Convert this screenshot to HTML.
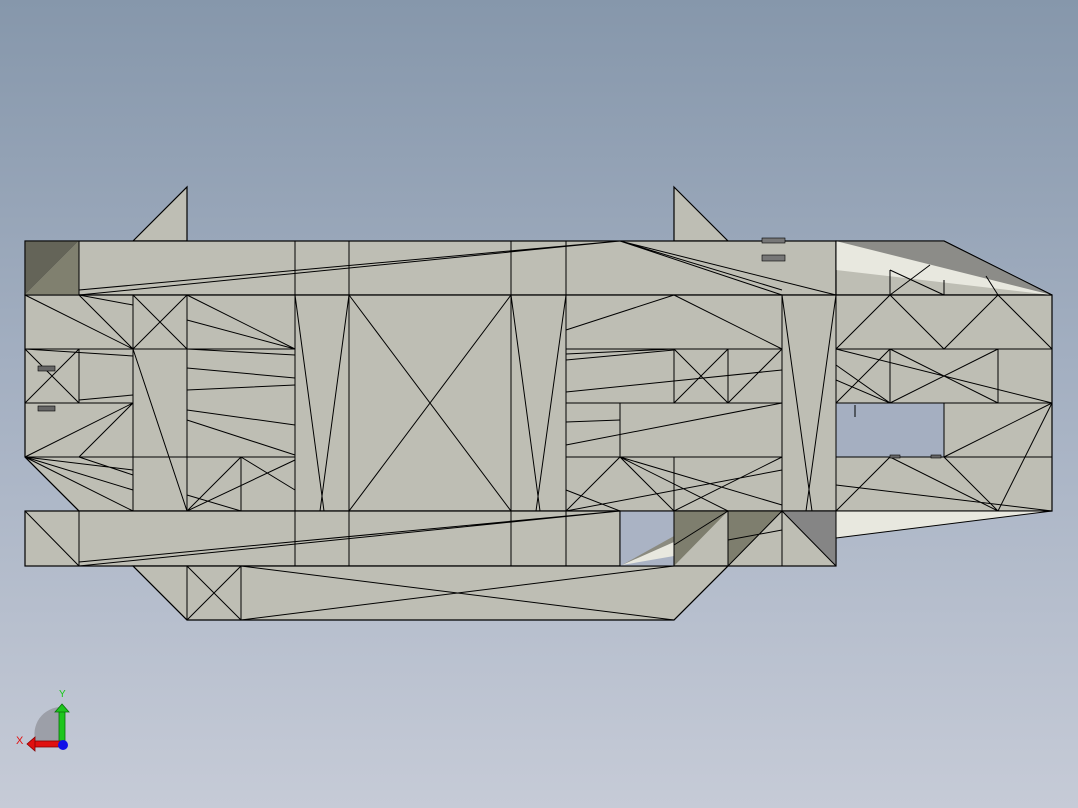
<!DOCTYPE html>
<html><head><style>
html,body{margin:0;padding:0;width:1078px;height:808px;overflow:hidden}
body{background:linear-gradient(#8697ab 0%,#a3afc1 45%,#c6cbd7 100%)}
svg{position:absolute;left:0;top:0}
</style></head><body>
<svg width="1078" height="808" viewBox="0 0 1078 808">
<g fill="#bebeb4" stroke="#000" stroke-width="1.2" stroke-linejoin="miter">
<!-- fins -->
<polygon points="133,241 187,187 187,241"/>
<polygon points="674,187 728,241 674,241"/>
<!-- top band -->
<rect x="25" y="241" width="811" height="54"/>
<polygon points="836,241 944,241 1052,295 836,295"/>
<!-- body -->
<polygon points="25,295 1052,295 1052,511 79,511 25,457"/>
<!-- bottom row -->
<rect x="25" y="511" width="595" height="55"/>
<rect x="674" y="511" width="162" height="55"/>
<!-- bottom fin -->
<polygon points="133,566 674,566 728,566 674,620 187,620"/>
</g>
<!-- holes -->
<rect x="836.6" y="403.6" width="107" height="53" fill="#a5afc1"/>
<polygon points="620.6,511.6 673.4,511.6 673.4,565.4 620.6,565.4" fill="#aab3c4"/>
<polygon points="622,565 674,540 674,556" fill="#e8e8df"/>
<polygon points="622,565 674,536 674,542" fill="#8b8b80"/>
<g fill="none" stroke="#000" stroke-width="1">
<line x1="620" y1="511" x2="620" y2="566"/><line x1="674" y1="511" x2="674" y2="566"/>
<line x1="620" y1="566" x2="674" y2="566"/><line x1="620" y1="511" x2="674" y2="511"/>
<rect x="836" y="403" width="108" height="54"/>
</g>
<!-- shaded faces -->
<polygon points="25,241 79,241 25,295" fill="#646458"/>
<polygon points="79,241 79,295 25,295" fill="#80806f"/>
<polygon points="836,241 836,270 1052,295" fill="#e8e8df"/>
<polygon points="836,241 944,241 1052,295" fill="#8c8c88"/>
<polygon points="836,511 1052,511 836,538" fill="#e8e8df"/>
<polygon points="674,511 728,511 674,566" fill="#7e7e6e"/>
<polygon points="728,511 782,511 728,566" fill="#7e7e6e"/>
<polygon points="782,511 836,511 836,566" fill="#858585"/>
<g fill="none" stroke="#000" stroke-width="1">
<!-- outline redraw -->
<polygon points="25,241 836,241 836,295 25,295"/>
<polygon points="836,241 944,241 1052,295 836,295"/>
<polygon points="25,295 1052,295 1052,511 79,511 25,457"/>
<polygon points="25,511 620,511 620,566 25,566"/>
<polygon points="674,511 836,511 836,566 674,566"/>
<polygon points="133,566 728,566 674,620 187,620"/>
<polyline points="836,511 1052,511 836,538"/>
<!-- verticals -->
<path d="M79 241V295M295 241V566M349 241V566M511 241V566M566 241V566M836 241V511M782 295V566M133 295V511M187 295V511M79 349V403M241 457V511M79 511V566M674 349V403M728 349V403M620 403V457M890 349V403M998 349V403M944 403V457M890 270V295M944 280V295M187 566V620M241 566V620M728 511V566M674 457V511"/>
<!-- horizontals -->
<path d="M25 349H295M566 349H782M836 349H1052M25 403H133M566 403H782M836 403H1052M25 457H295M566 457H782M836 457H1052M295 511H566"/>
<!-- X patterns -->
<path d="M133 295L187 349M187 295L133 349M25 349L79 403M79 349L25 403M187 566L241 620M241 566L187 620M349 295L511 511M511 295L349 511M674 349L728 403M728 349L674 403M728 403L782 349"/>
<path d="M295 295L324 511M349 295L320 511M511 295L540 511M566 295L536 511M782 295L812 511M836 295L806 511"/>
<path d="M836 349L890 295L944 349L998 295L1052 349M836 403L890 349M890 349L998 403M890 403L998 349M836 349L1052 403"/>
<path d="M1052 403L944 457M1052 403L998 511M836 511L890 457L998 511M944 457L998 511M836 485L1052 511"/>
<!-- left side diagonals -->
<path d="M25 295L133 349M79 295L133 349M79 295L133 305M187 295L295 349M187 320L295 349M25 457L133 403M79 457L133 403M25 457L133 511M25 457L133 470M25 457L133 490M79 457L133 475M187 511L133 349M187 349L295 355M187 368L295 378M187 390L295 385M187 410L295 425M187 420L295 455M187 511L241 457M187 511L295 460M187 495L241 511M241 457L295 490M25 511L79 566M79 290L620 241M79 295L620 241M241 566L674 620M241 620L674 566M79 566L620 511M79 562L620 511M25 349L133 356M79 400L133 395"/>
<!-- right-middle diagonals -->
<path d="M566 330L674 295M674 295L782 349M620 241L782 295M620 241L782 290M620 241L836 295M566 354L674 349M566 360L674 350M566 392L782 370M566 445L782 403M566 422L620 420M566 511L620 457L674 511M566 490L620 511M620 457L782 505M620 457L728 511M674 511L782 457M566 511L782 470M674 545L728 511M728 566L782 511M782 511L836 566M728 540L782 530M674 566L620 566"/>
<path d="M836 365L890 403M836 380L890 403M890 270L944 295M890 295L930 265M986 276L998 295"/>
</g>
<!-- small markers -->
<g fill="#222" stroke="#000" stroke-width="0.6">
<rect x="762" y="238" width="23" height="5" fill="#777"/>
<rect x="762" y="255" width="23" height="6" fill="#777"/>
<rect x="38" y="366" width="17" height="5" fill="#666"/>
<rect x="38" y="406" width="17" height="5" fill="#666"/>
<rect x="890" y="455" width="10" height="3" fill="#666"/>
<rect x="931" y="455" width="10" height="3" fill="#666"/>
</g>
<line x1="855" y1="405" x2="855" y2="417" stroke="#000"/>
<!-- axis gizmo -->
<path d="M36 743 A27 27 0 0 1 62 707 L62 743 Z" fill="#9c9fa8"/>
<rect x="59" y="710" width="6" height="33" fill="#1dc61d" stroke="#087008" stroke-width="0.8"/>
<polygon points="55,712 62,704 69,712" fill="#1dc61d" stroke="#087008" stroke-width="0.8"/>
<rect x="34" y="741" width="28" height="6" fill="#e01010" stroke="#800" stroke-width="0.8"/>
<polygon points="35,737 27,744 35,751" fill="#e01010" stroke="#800" stroke-width="0.8"/>
<circle cx="63" cy="745" r="5" fill="#1010e8"/>
<text x="59" y="697" font-family="Liberation Sans, sans-serif" font-size="10" fill="#18c818">Y</text>
<text x="16" y="744" font-family="Liberation Sans, sans-serif" font-size="11" fill="#e01010">X</text>
</svg>
</body></html>
